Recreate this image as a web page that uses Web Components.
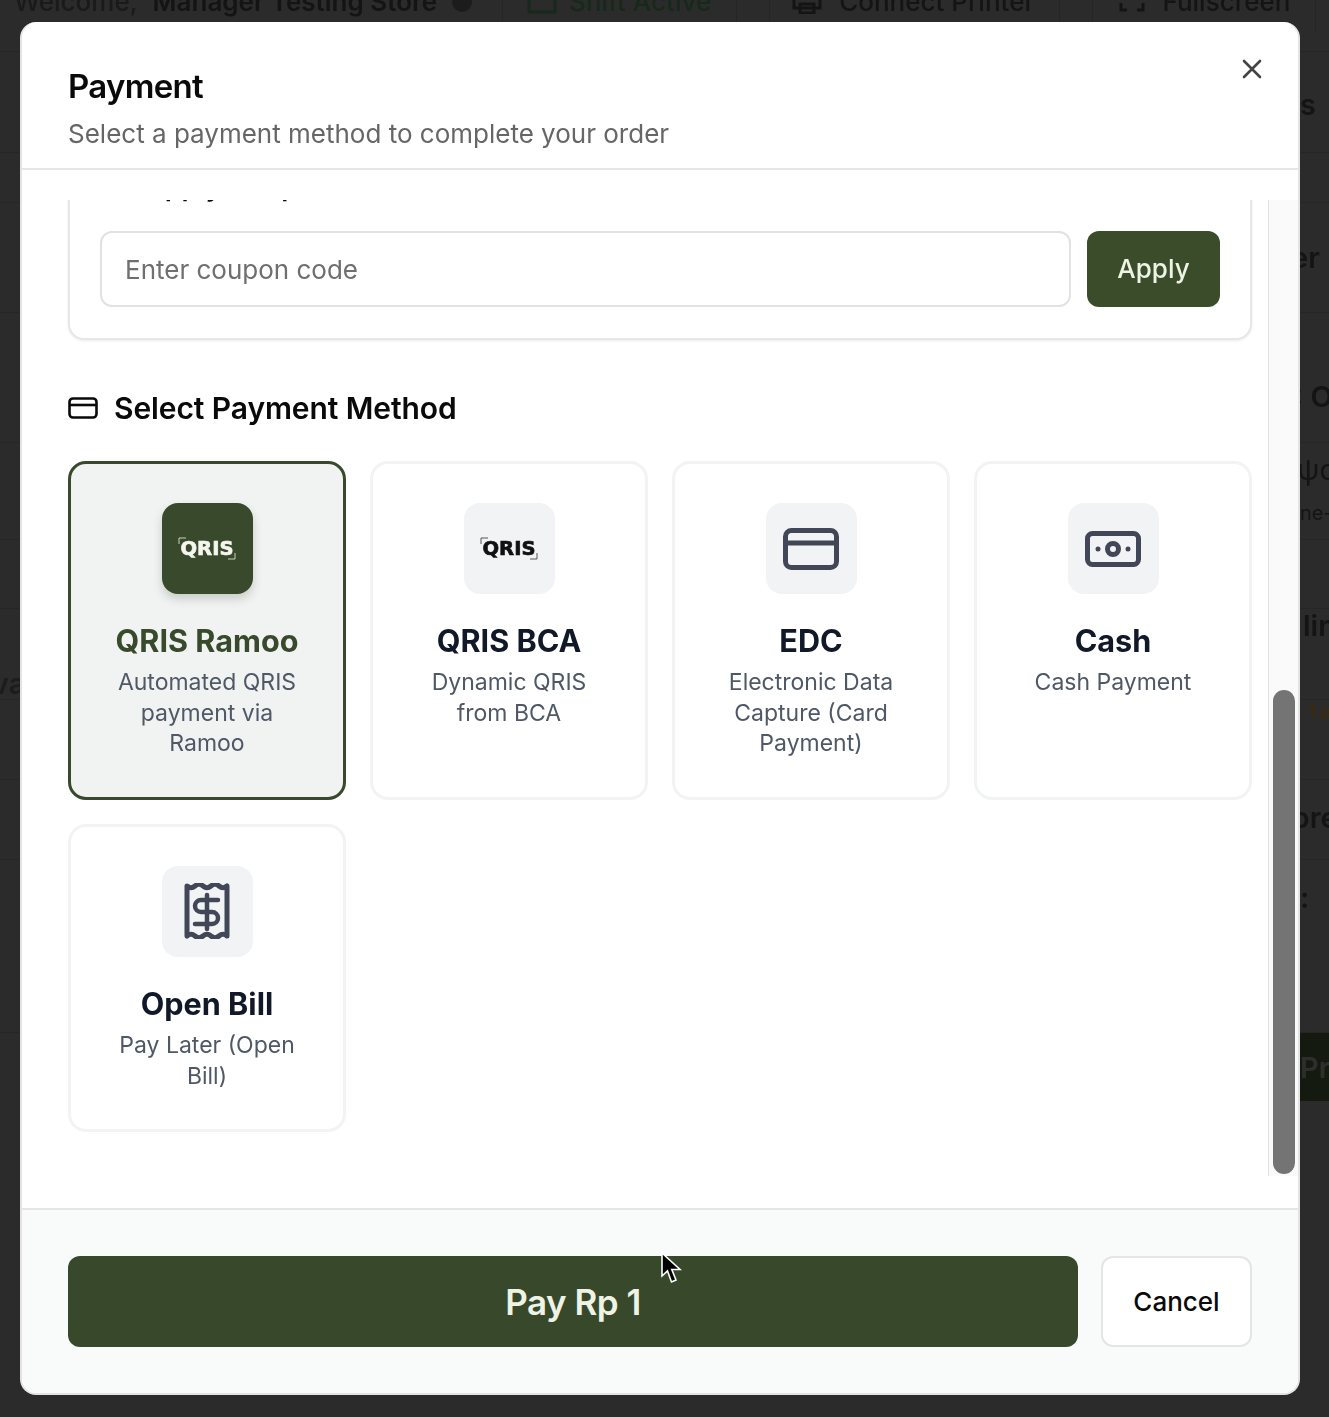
<!DOCTYPE html>
<html lang="en">
<head>
<meta charset="utf-8">
<title>Payment</title>
<style>
  html, body { margin: 0; height: 100%; background: #2b2b2b; overflow: hidden; font-family: Inter, "Noto Sans", sans-serif; }
</style>
</head>
<body>
<app-backdrop></app-backdrop>

<pay-modal title-text="Payment" subtitle="Select a payment method to complete your order">
  <coupon-box></coupon-box>
  <section-heading>Select Payment Method</section-heading>
  <method-grid>
    <pay-method name="QRIS Ramoo" selected>
      <svg slot="icon" width="60" height="28" viewBox="0 0 60 28" fill="none" aria-hidden="true">
        <path d="M2 9V3H9M58 18v6h-7" stroke="#c9d1bd" stroke-width="1"/>
        <text x="30" y="20" text-anchor="middle" textLength="53" lengthAdjust="spacingAndGlyphs" font-family="DejaVu Sans" font-weight="700" font-size="20" fill="#f4f6ef" stroke="#f4f6ef" stroke-width=".7">QRIS</text>
      </svg>
      Automated QRIS payment via Ramoo
    </pay-method>
    <pay-method name="QRIS BCA">
      <svg slot="icon" width="60" height="28" viewBox="0 0 60 28" fill="none" aria-hidden="true">
        <path d="M2 9V3H9M58 18v6h-7" stroke="#555" stroke-width="1"/>
        <text x="30" y="20" text-anchor="middle" textLength="53" lengthAdjust="spacingAndGlyphs" font-family="DejaVu Sans" font-weight="700" font-size="20" fill="#111" stroke="#111" stroke-width=".7">QRIS</text>
      </svg>
      Dynamic QRIS from BCA
    </pay-method>
    <pay-method name="EDC">
      <svg slot="icon" width="56" height="42" viewBox="0 0 56 42" fill="none" stroke="#414756" stroke-width="5" aria-hidden="true">
        <rect x="2.5" y="2.5" width="51" height="37" rx="6"/>
        <path d="M2.5 15H53.5"/>
      </svg>
      Electronic Data Capture (Card Payment)
    </pay-method>
    <pay-method name="Cash">
      <svg slot="icon" width="56" height="36" viewBox="0 0 56 36" fill="none" stroke="#414756" stroke-width="5" aria-hidden="true">
        <rect x="2.5" y="2.5" width="51" height="31" rx="5"/>
        <circle cx="28" cy="18" r="5.5"/>
        <circle cx="13" cy="18" r="2.5" fill="#414756" stroke="none"/>
        <circle cx="43" cy="18" r="2.5" fill="#414756" stroke="none"/>
      </svg>
      Cash Payment
    </pay-method>
    <pay-method name="Open Bill">
      <svg slot="icon" width="46" height="56" viewBox="0 0 46 56" fill="none" stroke="#414756" stroke-width="5" stroke-linejoin="round" stroke-linecap="round" aria-hidden="true">
        <path d="M3 3q4 3.5 8 0t8 0t8 0t8 0t8 0V53q-4-3.5-8 0t-8 0t-8 0t-8 0t-8 0Z"/>
        <path d="M34 17H17a6 6 0 0 0 0 12H28a6 6 0 0 1 0 12H11" stroke-width="4.5"/>
        <path d="M23 12V46" stroke-width="4.5"/>
      </svg>
      Pay Later (Open Bill)
    </pay-method>
  </method-grid>
  <pay-footer slot="footer" amount="Pay Rp 1"></pay-footer>
</pay-modal>

<mouse-pointer></mouse-pointer>

<script>
// Fons fosc de l'aplicació darrere del diàleg
class AppBackdrop extends HTMLElement {
  constructor() {
    super();
    this.attachShadow({ mode: 'open' });
  }

  connectedCallback() {
    // alçada, text, farciment superior i inferior, sagnat
    const rows = [
      [101, 's', 5, 0, 0], [50, '', 0, 0, 0], [110, 'er (', 0, 0, -9], [130, ': O', 38, 0, -6], [97, 'ψq<br><small>ne-</small>', 0, 0, -3],
      [69, '', 0, 0, 0], [91, 'lin', 0, 58, 3], [80, '1 p', 0, 56, 0], [80, 'ore', 0, 4, -8], [173, ':', 0, 98, 0], [68, 'Pr', 0, 0, 0]
    ];
    this.shadowRoot.innerHTML = `
      <style>
        :host { display: block; position: fixed; inset: 0; overflow: hidden; color: #141414; font-size: 29px; font-weight: 600; }
        .top {
          height: 52px; box-sizing: border-box; border-bottom: 1px solid #252525;
          display: flex; align-items: center; white-space: nowrap; padding: 0 0 48px 14px; font-size: 26px;
        }
        .welcome { font-weight: 500; color: #1a1a1a; margin-right: 15px; }
        .dot { width: 20px; height: 20px; border-radius: 50%; background: #1c1c1c; margin: 0 30px 0 15px; }
        .sep { width: 1px; height: 60px; background: #252525; flex: none; }
        .shift { color: #16291a; font-weight: 500; margin-right: 25px; }
        .cell { font-weight: 500; margin-right: 25px; }
        .top svg { flex: none; }
        .row { box-sizing: border-box; border-bottom: 1px solid #262626; display: flex; justify-content: flex-end; align-items: center; }
        .row span { width: 29px; overflow: hidden; white-space: nowrap; }
        .row small { font-size: 20px; }
        .row.pics span { line-height: 40px; font-weight: 400; }
        .row.warn span { color: #3a2a14; font-size: 18px; padding-left: 8px; width: 21px; }
        .row.btn { background: #141a10; margin-left: 1290px; border: 0; color: #2e2e2e; }
        .va { position: absolute; left: -8px; top: 666px; color: #1c1c1c; }
      </style>
      <div class="top">
        <span class="welcome">Welcome,</span><span>Manager Testing Store</span>
        <i class="dot"></i><i class="sep"></i>
        <svg width="30" height="24" viewBox="0 0 30 24" fill="none" stroke="#16291a" stroke-width="3" style="margin:0 12px 0 24px"><path d="M2 0V22H28V8"/></svg>
        <span class="shift">Shift Active</span><i class="sep"></i><i class="sep" style="margin:0 22px 0 32px"></i>
        <svg width="30" height="24" viewBox="0 0 30 24" fill="none" stroke="#141414" stroke-width="3" style="margin-right:17px"><path d="M8 0V8M22 0V8M2 8H28V18H2ZM8 14H22V23H8Z"/></svg>
        <span class="cell">Connect Printer</span><i class="sep"></i><i class="sep" style="margin:0 26px 0 32px"></i>
        <svg width="26" height="14" viewBox="0 0 26 14" fill="none" stroke="#141414" stroke-width="3" style="margin:8px 17px 0 0"><path d="M2 4V11H8M24 4V11H18"/></svg>
        <span class="cell">Fullscreen</span><i class="sep"></i>
      </div>
      ${rows.map(([h, text, padT, padB, indent]) => `<div class="row ${text === '1 p' ? 'warn' : ''} ${text === 'Pr' ? 'btn' : ''} ${text.includes('br') ? 'pics' : ''}" style="height:${h}px;padding:${padT}px 0 ${padB}px"><span style="text-indent:${indent}px">${text}</span></div>`).join('')}
      <span class="va">va</span>
    `;
  }
}

// Diàleg principal amb capçalera, zona de desplaçament i peu
class PayModal extends HTMLElement {
  constructor() {
    super();
    this.attachShadow({ mode: 'open' });
  }

  connectedCallback() {
    this.shadowRoot.innerHTML = `
      <style>
        :host {
          position: fixed; left: 20px; top: 22px; width: 1280px; height: 1373px;
          box-sizing: border-box; display: flex; flex-direction: column;
          background: #fff; border: 2px solid #e3e3e3; border-width: 0 2px 2px 2px; border-radius: 16px; overflow: hidden;
        }
        header { height: 148px; box-sizing: border-box; padding: 43px 46px 0; border-bottom: 2px solid #e5e5e5; position: relative; flex: none; }
        h1 { margin: 0; font-size: 33px; line-height: 42px; font-weight: 600; color: #0a0a0a; letter-spacing: -.7px; }
        p { margin: 9px 0 0; font-size: 26px; line-height: 36px; color: #666; }
        .close { position: absolute; left: 1220px; top: 37px; width: 20px; height: 20px; }
        .body { flex: 1; min-height: 0; display: flex; padding: 30px 0 32px; }
        .view { flex: 1; min-width: 0; overflow: hidden; display: flex; flex-direction: column; justify-content: flex-end; padding: 0 16px 0 46px; }
        .track { width: 30px; box-sizing: border-box; flex: none; background: #fafafa; border-left: 1px solid #e2e2e2; }
        .thumb { width: 22px; height: 484px; margin: 490px 0 0 4px; background: #747474; border-radius: 11px; }
      </style>
      <header>
        <h1>${this.getAttribute('title-text')}</h1>
        <p>${this.getAttribute('subtitle')}</p>
        <svg class="close" viewBox="0 0 20 20" fill="none" stroke="#444" stroke-width="2.6" stroke-linecap="round"><path d="M2 2L18 18M18 2L2 18"/></svg>
      </header>
      <div class="body">
        <div class="view"><slot></slot></div>
        <div class="track"><div class="thumb"></div></div>
      </div>
      <slot name="footer"></slot>
    `;
  }
}

// Targeta del cupó, retallada per dalt pel desplaçament
class CouponBox extends HTMLElement {
  constructor() {
    super();
    this.attachShadow({ mode: 'open' });
  }

  connectedCallback() {
    this.shadowRoot.innerHTML = `
      <style>
        :host { display: block; flex: none; box-sizing: border-box; background: #fff; border: 2px solid #e5e7eb; border-radius: 16px; box-shadow: 0 1px 3px rgba(0,0,0,.08); padding: 30px 30px 31px; }
        .title { display: flex; align-items: center; gap: 14px; font-size: 27px; line-height: 40px; font-weight: 600; color: #0a0a0a; margin-bottom: 24px; padding-left: 5px; }
        .title svg { flex: none; }
        .line { display: flex; gap: 16px; }
        .input {
          flex: 1; height: 76px; box-sizing: border-box; border: 2px solid #e2e2e2; border-radius: 12px;
          display: flex; align-items: center; padding: 2px 0 0 23px; font-size: 26px; color: #6f6f6f;
        }
        .apply {
          width: 133px; height: 76px; border-radius: 12px; background: #3a4c2a; color: #eef3e6;
          display: flex; align-items: center; justify-content: center; font-size: 26px; font-weight: 500;
        }
      </style>
      <div class="title">
        <svg width="26" height="26" viewBox="0 0 26 26" fill="none" stroke="#444" stroke-width="2.5"><rect x="2" y="2" width="22" height="22" rx="3"/></svg>
        Apply Coupon
      </div>
      <div class="line">
        <div class="input">Enter coupon code</div>
        <div class="apply">Apply</div>
      </div>
    `;
  }
}

// Títol de secció amb icona de targeta
class SectionHeading extends HTMLElement {
  constructor() {
    super();
    this.attachShadow({ mode: 'open' });
  }

  connectedCallback() {
    this.shadowRoot.innerHTML = `
      <style>
        :host { display: flex; flex: none; align-items: center; gap: 16px; height: 43px; margin: 47px 0 31px; font-size: 30px; font-weight: 600; color: #0a0a0a; letter-spacing: -.1px; }
        svg { flex: none; }
      </style>
      <svg width="30" height="22" viewBox="0 0 30 22" fill="none" stroke="#0a0a0a" stroke-width="2.6">
        <rect x="1.5" y="1.5" width="27" height="19" rx="3.5"/><path d="M1.5 8H28.5"/>
      </svg>
      <slot></slot>
    `;
  }
}

// Graella de mètodes de pagament
class MethodGrid extends HTMLElement {
  constructor() {
    super();
    this.attachShadow({ mode: 'open' }).innerHTML = `
      <style>:host { display: grid; flex: none; grid-template-columns: repeat(4, 1fr); gap: 24px; margin-bottom: 44px; align-items: stretch; }</style>
      <slot></slot>
    `;
  }
}

// Targeta d'un mètode de pagament
class PayMethod extends HTMLElement {
  constructor() {
    super();
    this.attachShadow({ mode: 'open' });
  }

  connectedCallback() {
    const selected = this.hasAttribute('selected');
    this.shadowRoot.innerHTML = `
      <style>
        :host {
          display: flex; flex-direction: column; align-items: center; box-sizing: border-box;
          padding: 40px 36px 38px; border: 3px solid ${selected ? '#384a2b' : '#f1f3f5'}; border-radius: 18px;
          background: ${selected ? '#f1f3f3' : '#fff'}; text-align: center;
          font-size: 23px; line-height: 30.4px; color: #4f5865;
        }
        .box {
          width: 91px; height: 91.5px; border-radius: 16px; flex: none; margin-top: -1px;
          display: flex; align-items: center; justify-content: center;
          background: ${selected ? '#384a2b' : '#f1f3f5'};
          ${selected ? 'box-shadow: 0 5px 10px rgba(56,74,43,.22);' : ''}
        }
        .name { margin: 25px 0 5px; font-size: 30.6px; line-height: 43px; font-weight: 700; color: ${selected ? '#384a2b' : '#111827'}; white-space: nowrap; }
      </style>
      <div class="box"><slot name="icon"></slot></div>
      <div class="name">${this.getAttribute('name')}</div>
      <slot></slot>
    `;
  }
}

// Peu del diàleg amb els botons
class PayFooter extends HTMLElement {
  constructor() {
    super();
    this.attachShadow({ mode: 'open' });
  }

  connectedCallback() {
    this.shadowRoot.innerHTML = `
      <style>
        :host { display: flex; flex: none; gap: 23px; height: 185px; box-sizing: border-box; padding: 46px 46px 0; background: #f9fafa; border-top: 2px solid #e5e5e5; }
        div { height: 91px; border-radius: 12px; display: flex; align-items: center; justify-content: center; box-sizing: border-box; }
        .pay { flex: 1; background: #37492a; color: #eef3e6; font-size: 35px; font-weight: 600; letter-spacing: -.5px; }
        .cancel { width: 151px; background: #fff; border: 2px solid #e5e5e5; color: #0a0a0a; font-size: 26px; font-weight: 500; }
      </style>
      <div class="pay">${this.getAttribute('amount')}</div>
      <div class="cancel">Cancel</div>
    `;
  }
}

// Punter del ratolí que surt a la captura
class MousePointer extends HTMLElement {
  constructor() {
    super();
    this.attachShadow({ mode: 'open' }).innerHTML = `
      <style>:host { position: fixed; left: 660px; top: 1251px; width: 24px; height: 34px; }</style>
      <svg width="24" height="34" viewBox="0 0 24 34">
        <path d="M2 2V25L7.5 20L11.5 31L16 29L11.8 18.5H20Z" fill="#000" stroke="#fff" stroke-width="1.6"/>
      </svg>
    `;
  }
}

customElements.define('app-backdrop', AppBackdrop);
customElements.define('pay-modal', PayModal);
customElements.define('coupon-box', CouponBox);
customElements.define('section-heading', SectionHeading);
customElements.define('method-grid', MethodGrid);
customElements.define('pay-method', PayMethod);
customElements.define('pay-footer', PayFooter);
customElements.define('mouse-pointer', MousePointer);
</script>
</body>
</html>
